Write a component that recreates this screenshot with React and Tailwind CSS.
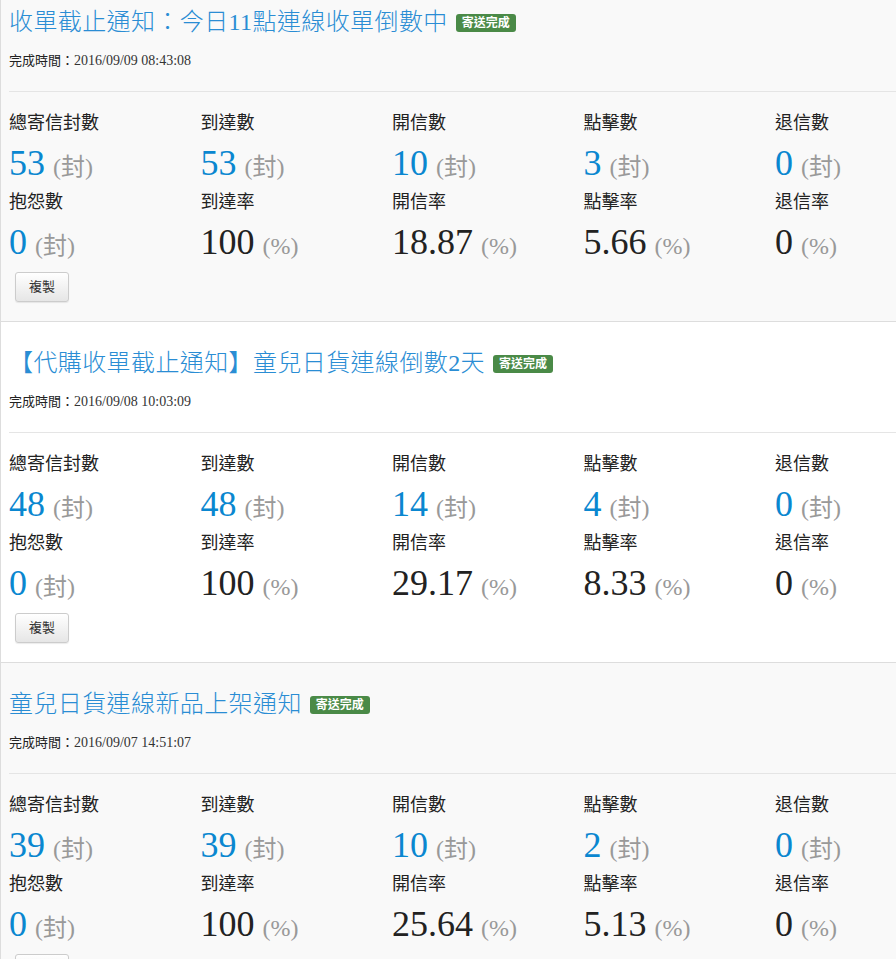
import React from 'react';

const FONT = { fontFamily: "'Liberation Serif', 'Noto Sans CJK TC', serif" };

const CAMPAIGNS = [
  {
    title: '收單截止通知：今日11點連線收單倒數中',
    done: '2016/09/09 08:43:08',
    bg: 'bg-[#f9f9f9]',
    stats: [53, 53, 10, 3, 0, 0, '100', '18.87', '5.66', '0'],
  },
  {
    title: '【代購收單截止通知】童兒日貨連線倒數2天',
    done: '2016/09/08 10:03:09',
    bg: 'bg-white',
    stats: [48, 48, 14, 4, 0, 0, '100', '29.17', '8.33', '0'],
  },
  {
    title: '童兒日貨連線新品上架通知',
    done: '2016/09/07 14:51:07',
    bg: 'bg-[#f9f9f9]',
    stats: [39, 39, 10, 2, 0, 0, '100', '25.64', '5.13', '0'],
  },
];

// label, unit, is count (blue)
const FIELDS = [
  ['總寄信封數', '封', true],
  ['到達數', '封', true],
  ['開信數', '封', true],
  ['點擊數', '封', true],
  ['退信數', '封', true],
  ['抱怨數', '封', true],
  ['到達率', '%', false],
  ['開信率', '%', false],
  ['點擊率', '%', false],
  ['退信率', '%', false],
];

export default function App() {
  return (
    <div className="h-[959px] w-[896px] overflow-hidden bg-white text-[#333]" style={FONT}>
      <div className="-mt-[19px] border-l border-[#ddd]">
        {CAMPAIGNS.map((c, i) => (
          <Campaign key={i} c={c} />
        ))}
      </div>
    </div>
  );
}

function Campaign({ c }) {
  return (
    <div className={`border-b border-[#ddd] pb-[19px] pl-[8px] pt-[26px] ${c.bg}`}>
      <div className="flex h-[30px] items-center whitespace-nowrap">
        <span className="text-[24px] font-light leading-[30px] tracking-[0.4px] text-[#2a8dd4]">{c.title}</span>
        <span className="ml-[8px] mt-[2px] h-[18px] rounded-[3px] bg-[#4a8a47] px-[6px] text-[12px] font-bold leading-[18px] text-white">
          寄送完成
        </span>
      </div>
      <div className="mt-[13px] h-[20px] whitespace-nowrap leading-[20px]">
        <span className="text-[13px] text-[#222]">完成時間：</span>
        <span className="text-[14px] text-[#333]">{c.done}</span>
      </div>
      <div className="mt-[21px] border-t border-[#e5e5e5]" />
      <div className="mt-[19px] grid grid-cols-[repeat(5,191.5px)]">
        {FIELDS.map(([label, unit, blue], idx) => (
          <div key={label}>
            <div className="h-[24px] whitespace-nowrap text-[18px] leading-[24px] text-[#222]">{label}</div>
            <div className="h-[55px] whitespace-nowrap pt-[4px] leading-[48px]">
              <span className={`text-[36px] ${blue ? 'text-[#0a87d0]' : 'text-[#222]'}`}>{c.stats[idx]}</span>
              <span className="ml-[8px] text-[24px] text-[#999]">({unit})</span>
            </div>
          </div>
        ))}
      </div>
      <button className="ml-[6px] mt-[3px] h-[30px] w-[54px] rounded-[3px] border border-[#ccc] bg-gradient-to-b from-white to-[#e6e6e6] text-[13px] text-[#333] shadow-[0_1px_1px_rgba(0,0,0,0.08)]">
        複製
      </button>
    </div>
  );
}
